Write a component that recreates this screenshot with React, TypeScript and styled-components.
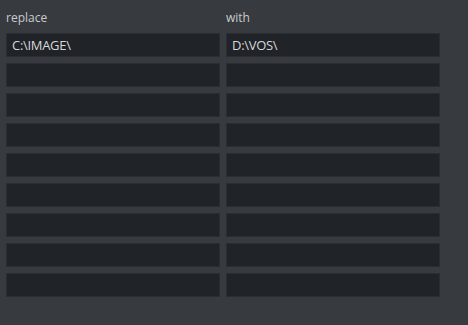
import { Fragment } from "react";
import styled, { createGlobalStyle } from "styled-components";

const GlobalStyle = createGlobalStyle`
  html, body {
    margin: 0;
    padding: 0;
    background: #373a3f;
  }
  body {
    font-family: "Open Sans", "Noto Sans", sans-serif;
  }
`;

const Panel = styled.div`
  width: 468px;
  height: 325px;
  box-sizing: border-box;
  padding: 9px 0 0 6px;
  background: #373a3f;
`;

const Grid = styled.div`
  display: grid;
  grid-template-columns: 214px 214px;
  column-gap: 6px;
  row-gap: 6px;
`;

const Label = styled.div`
  font-size: 12px;
  line-height: 18px;
  color: #c9cbcd;
`;

const Field = styled.input`
  box-sizing: border-box;
  width: 214px;
  height: 24px;
  margin: 0;
  padding: 0 4px 0 5px;
  background: #202327;
  border: 1px solid #2a2d32;
  border-radius: 0;
  outline: none;
  font-family: "Open Sans", "Noto Sans", sans-serif;
  font-size: 13px;
  letter-spacing: -0.3px;
  color: #d6d8da;
`;

const rows: [string, string][] = [
  ["C:\\IMAGE\\", "D:\\VOS\\"],
  ["", ""],
  ["", ""],
  ["", ""],
  ["", ""],
  ["", ""],
  ["", ""],
  ["", ""],
  ["", ""],
];

export default function App() {
  return (
    <>
      <GlobalStyle />
      <Panel>
        <Grid>
          <Label>replace</Label>
          <Label>with</Label>
          {rows.map(([from, to], i) => (
            <Fragment key={i}>
              <Field defaultValue={from} />
              <Field defaultValue={to} />
            </Fragment>
          ))}
        </Grid>
      </Panel>
    </>
  );
}
